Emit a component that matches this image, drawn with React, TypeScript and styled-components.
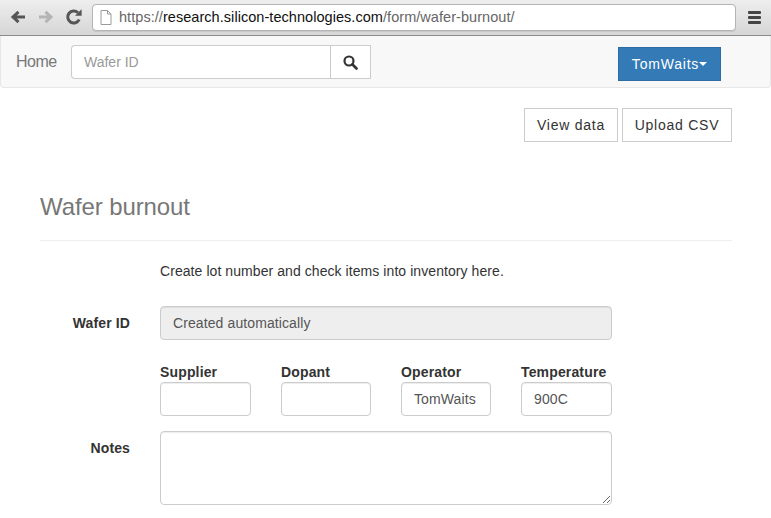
import React from "react";
import styled, { createGlobalStyle } from "styled-components";

const Global = createGlobalStyle`
  html, body { margin: 0; padding: 0; background: #fff; height: 518px; overflow: hidden; }
  body { font-family: "Liberation Sans", Arial, sans-serif; font-size: 14px; color: #333; }
  * { box-sizing: border-box; }
`;

const Chrome = styled.div`
  height: 36px;
  display: flex;
  align-items: center;
  padding: 0 0 1px 9px;
  background: linear-gradient(#eeeeee, #d6d6d6);
  border-bottom: 1px solid #8c8c8c;
`;
const NavIcon = styled.svg<{ $gap: number }>`
  width: 18px;
  height: 18px;
  flex: none;
  margin-right: ${(p) => p.$gap}px;
`;
const UrlBar = styled.div`
  width: 644px;
  height: 27px;
  display: flex;
  align-items: center;
  gap: 7px;
  padding-left: 7px;
  background: #fff;
  border: 1px solid #b4b4b4;
  border-radius: 4px;
  box-shadow: 0 1px 0 #c8c8c8;
  font-size: 14.5px;
  color: #666;
  letter-spacing: 0.05px;
`;
const Host = styled.span`
  color: #111;
`;
const Menu = styled.div`
  margin-left: 12px;
  width: 13px;
  display: flex;
  flex-direction: column;
  gap: 2px;
`;
const MenuBar = styled.span`
  height: 3px;
  background: #444;
  border-radius: 1px;
`;

const Navbar = styled.nav`
  height: 52px;
  display: flex;
  align-items: flex-start;
  background: #f8f8f8;
  border: 1px solid #e7e7e7;
  border-top: none;
  border-radius: 0 0 4px 4px;
  padding: 9px 0 0 15px;
`;
const Brand = styled.a`
  color: #777;
  font-size: 16px;
  line-height: 34px;
  width: 55px;
  letter-spacing: -0.5px;
`;
const SearchGroup = styled.div`
  display: flex;
  width: 300px;
`;
const SearchInput = styled.input`
  width: 260px;
  height: 34px;
  border: 1px solid #ccc;
  border-right: none;
  border-radius: 4px 0 0 4px;
  padding: 0 12px;
  font: 14px "Liberation Sans", Arial, sans-serif;
  background: #fff;
  outline: none;
  &::placeholder { color: #999; opacity: 1; }
`;
const SearchButton = styled.button`
  width: 41px;
  height: 34px;
  border: 1px solid #ccc;
  background: #fff;
  padding: 0;
  display: flex;
  align-items: center;
  justify-content: center;
`;
const UserButton = styled.button`
  margin: 2px 0 0 247px;
  width: 103px;
  height: 34px;
  background: #337ab7;
  border: 1px solid #2e6da4;
  color: #fff;
  padding: 0;
  font: 14px "Liberation Sans", Arial, sans-serif;
  letter-spacing: 0.8px;
  display: flex;
  align-items: center;
  justify-content: center;
`;
const Caret = styled.span`
  width: 0;
  height: 0;
  border-top: 4px solid #fff;
  border-left: 4px solid transparent;
  border-right: 4px solid transparent;
`;

const Page = styled.main`
  padding: 20px 39px 0 40px;
`;
const Actions = styled.div`
  display: flex;
  justify-content: flex-end;
  gap: 4px;
`;
const ActionButton = styled.button<{ $w: number }>`
  width: ${(p) => p.$w}px;
  height: 34px;
  background: #fff;
  border: 1px solid #ccc;
  color: #333;
  padding: 0;
  font: 14px "Liberation Sans", Arial, sans-serif;
  letter-spacing: 0.75px;
`;
const Header = styled.header`
  margin-top: 50px;
  height: 49px;
  border-bottom: 1px solid #eee;
`;
const Title = styled.h1`
  margin: 0;
  font-size: 24px;
  line-height: 29px;
  font-weight: 400;
  color: #777;
  letter-spacing: -0.1px;
`;
const Intro = styled.p`
  margin: 20px 0 0 120px;
  line-height: 20px;
  color: #333;
  letter-spacing: 0.07px;
`;
const Row = styled.div<{ $top: number }>`
  display: flex;
  margin-top: ${(p) => p.$top}px;
`;
const SideLabel = styled.label`
  width: 90px;
  margin-right: 30px;
  padding-top: 7px;
  text-align: right;
  font-weight: 700;
  line-height: 20px;
  flex: none;
  letter-spacing: 0.12px;
`;
const Input = styled.input<{ $w?: number }>`
  display: block;
  width: ${(p) => (p.$w ? `${p.$w}px` : "452px")};
  height: 34px;
  padding: 0 12px;
  border: 1px solid #ccc;
  border-radius: 4px;
  background: #fff;
  color: #555;
  font: 14px "Liberation Sans", Arial, sans-serif;
  letter-spacing: 0.1px;
  outline: none;
  box-shadow: inset 0 1px 1px rgba(0, 0, 0, 0.075);
  &:disabled { background: #eee; opacity: 1; -webkit-text-fill-color: #555; }
`;
const Fields = styled.div`
  margin-left: 120px;
  display: flex;
  gap: 30px;
`;
const Field = styled.div`
  display: flex;
  flex-direction: column;
`;
const FieldLabel = styled.label`
  font-weight: 700;
  line-height: 20px;
  height: 20px;
  white-space: nowrap;
  letter-spacing: 0.15px;
`;
const Notes = styled.textarea`
  display: block;
  width: 452px;
  height: 74px;
  padding: 6px 12px;
  border: 1px solid #ccc;
  border-radius: 4px;
  background: #fff;
  outline: none;
  resize: vertical;
  box-shadow: inset 0 1px 1px rgba(0, 0, 0, 0.075);
  font: 14px "Liberation Sans", Arial, sans-serif;
`;

export default function App() {
  return (
    <>
      <Global />
      <Chrome>
        <NavIcon viewBox="0 0 18 18" $gap={10}>
          <path d="M16 9H5M9.500 3.800 4 9l5.500 5.200" fill="none" stroke="#555" strokeWidth="3" />
        </NavIcon>
        <NavIcon viewBox="0 0 18 18" $gap={10}>
          <path d="M2 9h11M8.500 3.800 14 9l-5.500 5.200" fill="none" stroke="#b4b4b4" strokeWidth="3" />
        </NavIcon>
        <NavIcon viewBox="0 0 18 18" $gap={9}>
          <path d="M14.200 11.500A6 6 0 1 1 13 4.800" fill="none" stroke="#555" strokeWidth="3" />
          <path d="M10 7.800h6.600V1.200z" fill="#555" />
        </NavIcon>
        <UrlBar>
          <svg width="12" height="15" viewBox="0 0 12 15">
            <path d="M1 .5h6.500L11 4v10.500H1zM7.500.5V4H11" fill="#fff" stroke="#9a9a9a" />
          </svg>
          <span>
            https://<Host>research.silicon-technologies.com</Host>/form/wafer-burnout/
          </span>
        </UrlBar>
        <Menu>
          <MenuBar />
          <MenuBar />
          <MenuBar />
        </Menu>
      </Chrome>
      <Navbar>
        <Brand>Home</Brand>
        <SearchGroup>
          <SearchInput placeholder="Wafer ID" />
          <SearchButton aria-label="Search">
            <svg width="15" height="15" viewBox="0 0 15 15">
              <circle cx="6" cy="6" r="4.500" fill="none" stroke="#333" strokeWidth="2.200" />
              <path d="M9.500 9.500l4 4" stroke="#333" strokeWidth="2.600" strokeLinecap="round" />
            </svg>
          </SearchButton>
        </SearchGroup>
        <UserButton>
          TomWaits
          <Caret />
        </UserButton>
      </Navbar>
      <Page>
        <Actions>
          <ActionButton $w={94}>View data</ActionButton>
          <ActionButton $w={110}>Upload CSV</ActionButton>
        </Actions>
        <Header>
          <Title>Wafer burnout</Title>
        </Header>
        <Intro>Create lot number and check items into inventory here.</Intro>
        <Row $top={25}>
          <SideLabel>Wafer ID</SideLabel>
          <Input disabled value="Created automatically" readOnly />
        </Row>
        <Row $top={22}>
          <Fields>
            <Field>
              <FieldLabel>Supplier</FieldLabel>
              <Input $w={91} />
            </Field>
            <Field>
              <FieldLabel>Dopant</FieldLabel>
              <Input $w={90} />
            </Field>
            <Field>
              <FieldLabel>Operator</FieldLabel>
              <Input $w={90} value="TomWaits" readOnly />
            </Field>
            <Field>
              <FieldLabel>Temperature</FieldLabel>
              <Input $w={91} value="900C" readOnly />
            </Field>
          </Fields>
        </Row>
        <Row $top={15}>
          <SideLabel>Notes</SideLabel>
          <Notes />
        </Row>
      </Page>
    </>
  );
}
